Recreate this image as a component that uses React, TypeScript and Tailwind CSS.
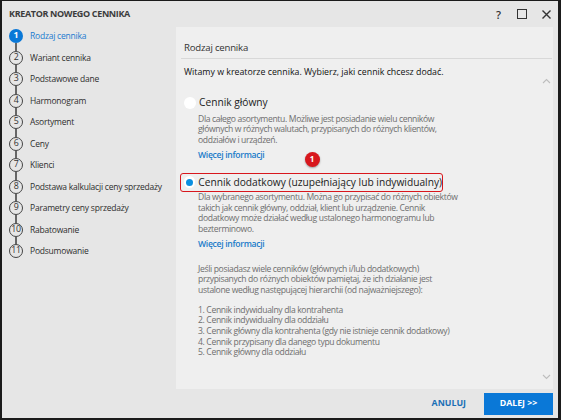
import React from "react";

const steps = [
  "Rodzaj cennika",
  "Wariant cennika",
  "Podstawowe dane",
  "Harmonogram",
  "Asortyment",
  "Ceny",
  "Klienci",
  "Podstawa kalkulacji ceny sprzedaży",
  "Parametry ceny sprzedaży",
  "Rabatowanie",
  "Podsumowanie",
];

const desc1 = [
  "Dla całego asortymentu. Możliwe jest posiadanie wielu cenników",
  "głównych w różnych walutach, przypisanych do różnych klientów,",
  "oddziałów i urządzeń.",
];
const desc2 = [
  "Dla wybranego asortymentu. Można go przypisać do różnych obiektów",
  "takich jak cennik główny, oddział, klient lub urządzenie. Cennik",
  "dodatkowy może działać według ustalonego harmonogramu lub",
  "bezterminowo.",
];
const para = [
  "Jeśli posiadasz wiele cenników (głównych i/lub dodatkowych)",
  "przypisanych do różnych obiektów pamiętaj, że ich działanie jest",
  "ustalone według następującej hierarchii (od najważniejszego):",
];
const list = [
  "1. Cennik indywidualny dla kontrahenta",
  "2. Cennik indywidualny dla oddziału",
  "3. Cennik główny dla kontrahenta (gdy nie istnieje cennik dodatkowy)",
  "4. Cennik przypisany dla danego typu dokumentu",
  "5. Cennik główny dla oddziału",
];

function Chevron({ up }: { up?: boolean }) {
  return (
    <svg width="9" height="6" viewBox="0 0 9 6" className="block">
      <path
        d={up ? "M1 5 L4.5 1.5 L8 5" : "M1 1 L4.5 4.5 L8 1"}
        fill="none"
        stroke="#bdbdbd"
        strokeWidth="1.1"
      />
    </svg>
  );
}

function Lines({ lines, cls }: { lines: string[]; cls: string }) {
  return (
    <div className={cls}>
      {lines.map((l) => (
        <div key={l} className="h-[10.6px] leading-[10.6px] whitespace-nowrap">
          {l}
        </div>
      ))}
    </div>
  );
}

export default function App() {
  const font = { fontFamily: '"Open Sans", "Noto Sans", sans-serif' };
  return (
    <div
      className="w-[561px] h-[420px] overflow-hidden bg-[#e6e6e6] border-l-2 border-t border-r-[3px] border-b-2 border-[#1b1b1b] flex flex-col"
      style={font}
    >
      {/* title bar */}
      <div className="h-[26px] flex items-center pl-[7px] pr-[7px] shrink-0">
        <div className="text-[9px] tracking-[-0.35px] font-bold text-[#3c3c3c]">KREATOR NOWEGO CENNIKA</div>
        <div className="ml-auto flex items-center text-[#333]">
          <span className="text-[11px] leading-none font-semibold">?</span>
          <span className="ml-[16px] w-[10px] h-[10px] border-[1.5px] border-[#333]"></span>
          <svg width="9" height="9" viewBox="0 0 9 9" className="ml-[15px]">
            <path d="M0.5 0.5 L8.5 8.5 M8.5 0.5 L0.5 8.5" stroke="#333" strokeWidth="1.4" />
          </svg>
        </div>
      </div>

      {/* body */}
      <div className="flex h-[362px] shrink-0">
        {/* sidebar */}
        <div className="w-[174px] shrink-0 pl-[7px] pt-[2px] flex flex-col">
          {steps.map((s, i) => {
            const active = i === 0;
            const last = i === steps.length - 1;
            return (
              <div key={s} className="flex items-start">
                <div className="w-[14px] flex flex-col items-center">
                  <div
                    className={
                      active
                        ? "w-[14px] h-[14px] rounded-full bg-[#0a78d7] text-white flex items-center justify-center text-[8.8px] font-bold"
                        : "w-[14px] h-[14px] rounded-full border-[1.3px] border-[#444] text-[#333] flex items-center justify-center text-[8.8px] tracking-[-0.4px]"
                    }
                  >
                    {i + 1}
                  </div>
                  <div className={last ? "h-[7.5px] w-[1.3px]" : "h-[7.5px] w-[1.3px] bg-[#666]"}></div>
                </div>
                <div
                  className={
                    "ml-[7px] leading-[14px] text-[8.5px] tracking-[-0.22px] whitespace-nowrap " +
                    (active ? "text-[#1a7bd0]" : "text-[#2e2e2e]")
                  }
                >
                  {s}
                </div>
              </div>
            );
          })}
        </div>

        {/* main panel */}
        <div className="w-[377px] shrink-0 bg-[#efefef] flex flex-col">
          <div className="h-[32px] shrink-0 pt-[14px] ml-[5px] mr-[1px] border-b border-[#d8d8d8]">
            <div className="pl-[3px] text-[9.6px] tracking-[-0.2px] leading-[14px] text-[#333]">Rodzaj cennika</div>
          </div>
          <div className="pl-[8px] pt-[7px] h-[19px] shrink-0 text-[8.8px] leading-[12px] text-[#111]">
            Witamy w kreatorze cennika. Wybierz, jaki cennik chcesz dodać.
          </div>
          <div className="flex flex-1 min-h-0">
            <div className="flex-1 pl-[8px] pt-[16px] relative">
              {/* option 1 */}
              <div className="flex items-center h-[18px]">
                <div className="w-[12px] h-[12px] rounded-full bg-white"></div>
                <div className="ml-[3px] text-[10.2px] text-[#222] whitespace-nowrap">Cennik główny</div>
              </div>
              <Lines lines={desc1} cls="pl-[14px] pt-[1.7px] text-[8.6px] tracking-[-0.35px] text-[#6e6e6e]" />
              <div className="pl-[14px] pt-[3.5px] h-[15.5px] text-[8.6px] tracking-[-0.3px] leading-[12px] font-semibold text-[#1a7bc9]">
                Więcej informacji
              </div>

              {/* badge */}
              <div className="absolute left-[128.5px] top-[73.5px] w-[15px] h-[15px] rounded-full bg-[#d8171d] text-white text-[8px] font-bold flex items-center justify-center shadow-[0_1px_2px_rgba(0,0,0,0.35)]">
                1
              </div>

              {/* option 2 */}
              <div className="mt-[12px] -ml-[4px] w-[263px] h-[19px] border-[1.5px] border-[#d8171d] rounded-[3px] flex items-center pl-[2.5px]">
                <div className="w-[12px] h-[12px] rounded-full bg-white flex items-center justify-center">
                  <div className="w-[7px] h-[7px] rounded-full bg-[#0a8fe0]"></div>
                </div>
                <div className="ml-[3px] text-[10.2px] text-[#222] whitespace-nowrap">
                  Cennik dodatkowy (uzupełniający lub indywidualny)
                </div>
              </div>
              <Lines lines={desc2} cls="pl-[14px] text-[8.6px] tracking-[-0.35px] text-[#6e6e6e]" />
              <div className="pl-[14px] pt-[3.7px] h-[15.7px] text-[8.6px] tracking-[-0.3px] leading-[12px] font-semibold text-[#1a7bc9]">
                Więcej informacji
              </div>
              <Lines lines={para} cls="pl-[14px] pt-[13.7px] text-[8.6px] tracking-[-0.35px] text-[#6e6e6e]" />
              <Lines lines={list} cls="pl-[14px] pt-[9.4px] text-[8.6px] tracking-[-0.35px] text-[#6e6e6e]" />
            </div>
            <div className="w-[14px] flex flex-col items-center justify-between pb-[9px]">
              <Chevron up />
              <Chevron />
            </div>
          </div>
        </div>
      </div>

      {/* footer */}
      <div className="h-[29px] shrink-0 flex items-center justify-end pr-[5px]">
        <div className="text-[8.8px] font-bold text-[#1a6fb5] mr-[18px]">ANULUJ</div>
        <div className="w-[69px] h-[22px] bg-[#0a78d7] text-white text-[8.8px] font-bold flex items-center justify-center">
          DALEJ &gt;&gt;
        </div>
      </div>
    </div>
  );
}
